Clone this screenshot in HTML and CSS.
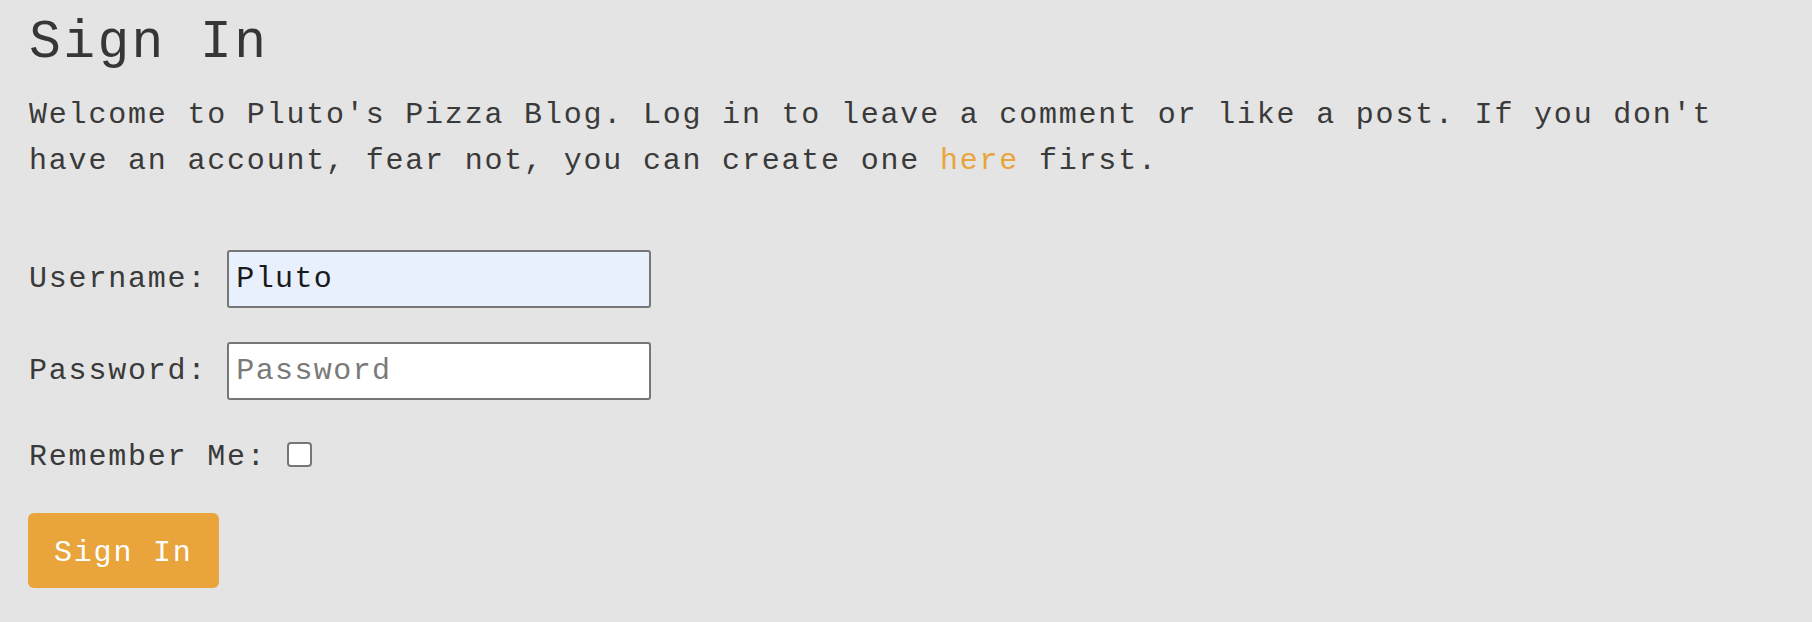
FILE: index.html
```html
<!DOCTYPE html>
<html lang="en">
<head>
<meta charset="utf-8">
<title>Sign In</title>
<link rel="stylesheet" href="styles.css">
</head>
<body>
<main class="page">
  <h1 class="title">Sign In</h1>
  <p class="intro">Welcome to Pluto's Pizza Blog. Log in to leave a comment or like a post. If you don't have an account, fear not, you can create one <a class="link" href="#">here</a> first.</p>
  <form class="form">
    <div class="row row-user">
      <label class="label" for="username">Username:</label>
      <input class="field field-filled" id="username" type="text" value="Pluto">
    </div>
    <div class="row row-pass">
      <label class="label" for="password">Password:</label>
      <input class="field" id="password" type="password" placeholder="Password">
    </div>
    <div class="row row-remember">
      <label class="label" for="remember">Remember Me:</label>
      <input class="check" id="remember" type="checkbox">
    </div>
    <button class="btn" type="button">Sign In</button>
  </form>
</main>
</body>
</html>
```
FILE: styles.css
```css
html, body {
  margin: 0;
  padding: 0;
  background: #e4e4e4;
}
body {
  font-family: "Liberation Mono", "DejaVu Sans Mono", monospace;
  color: #3a3a3a;
}
.page {
  padding: 0 29px;
  display: flex;
  flex-direction: column;
  align-items: flex-start;
}
.title {
  margin: 13px 0 0 0;
  font-size: 53px;
  line-height: 60px;
  font-weight: normal;
  letter-spacing: 2.4px;
  color: #363636;
}
.intro {
  margin: 19px 0 0 0;
  font-size: 30px;
  line-height: 46px;
  letter-spacing: 1.8px;
}
.link {
  color: #e9a43c;
  text-decoration: none;
}
.form {
  display: flex;
  flex-direction: column;
  align-items: flex-start;
  margin-top: 66px;
}
.row {
  display: flex;
  align-items: center;
  column-gap: 20px;
}
.row-pass {
  margin-top: 34px;
}
.row-remember {
  margin-top: 34px;
  align-items: flex-start;
}
.label {
  font-size: 30px;
  line-height: 46px;
  letter-spacing: 1.8px;
}
.field {
  box-sizing: border-box;
  width: 424px;
  height: 58px;
  margin: 0;
  padding: 0 7px;
  border: 2px solid #767676;
  border-radius: 3px;
  background: #ffffff;
  font-family: "Liberation Mono", "DejaVu Sans Mono", monospace;
  font-size: 30px;
  letter-spacing: 1.4px;
  color: #1a1a1a;
  outline: none;
}
.field::placeholder {
  color: #7a7a7a;
}
.field-filled {
  background: #e8f0fe;
}
.check {
  appearance: none;
  -webkit-appearance: none;
  box-sizing: border-box;
  width: 25px;
  height: 25px;
  margin: 8px 0 0 0;
  border: 2px solid #767676;
  border-radius: 4px;
  background: #ffffff;
}
.btn {
  margin-top: 33px;
  margin-left: -1px;
  padding: 23px 26px 18px 26px;
  border: none;
  border-radius: 6px;
  background: #e9a43c;
  color: #ffffff;
  font-family: "Liberation Mono", "DejaVu Sans Mono", monospace;
  font-size: 30px;
  line-height: 34px;
  letter-spacing: 1.8px;
  cursor: pointer;
}
```
